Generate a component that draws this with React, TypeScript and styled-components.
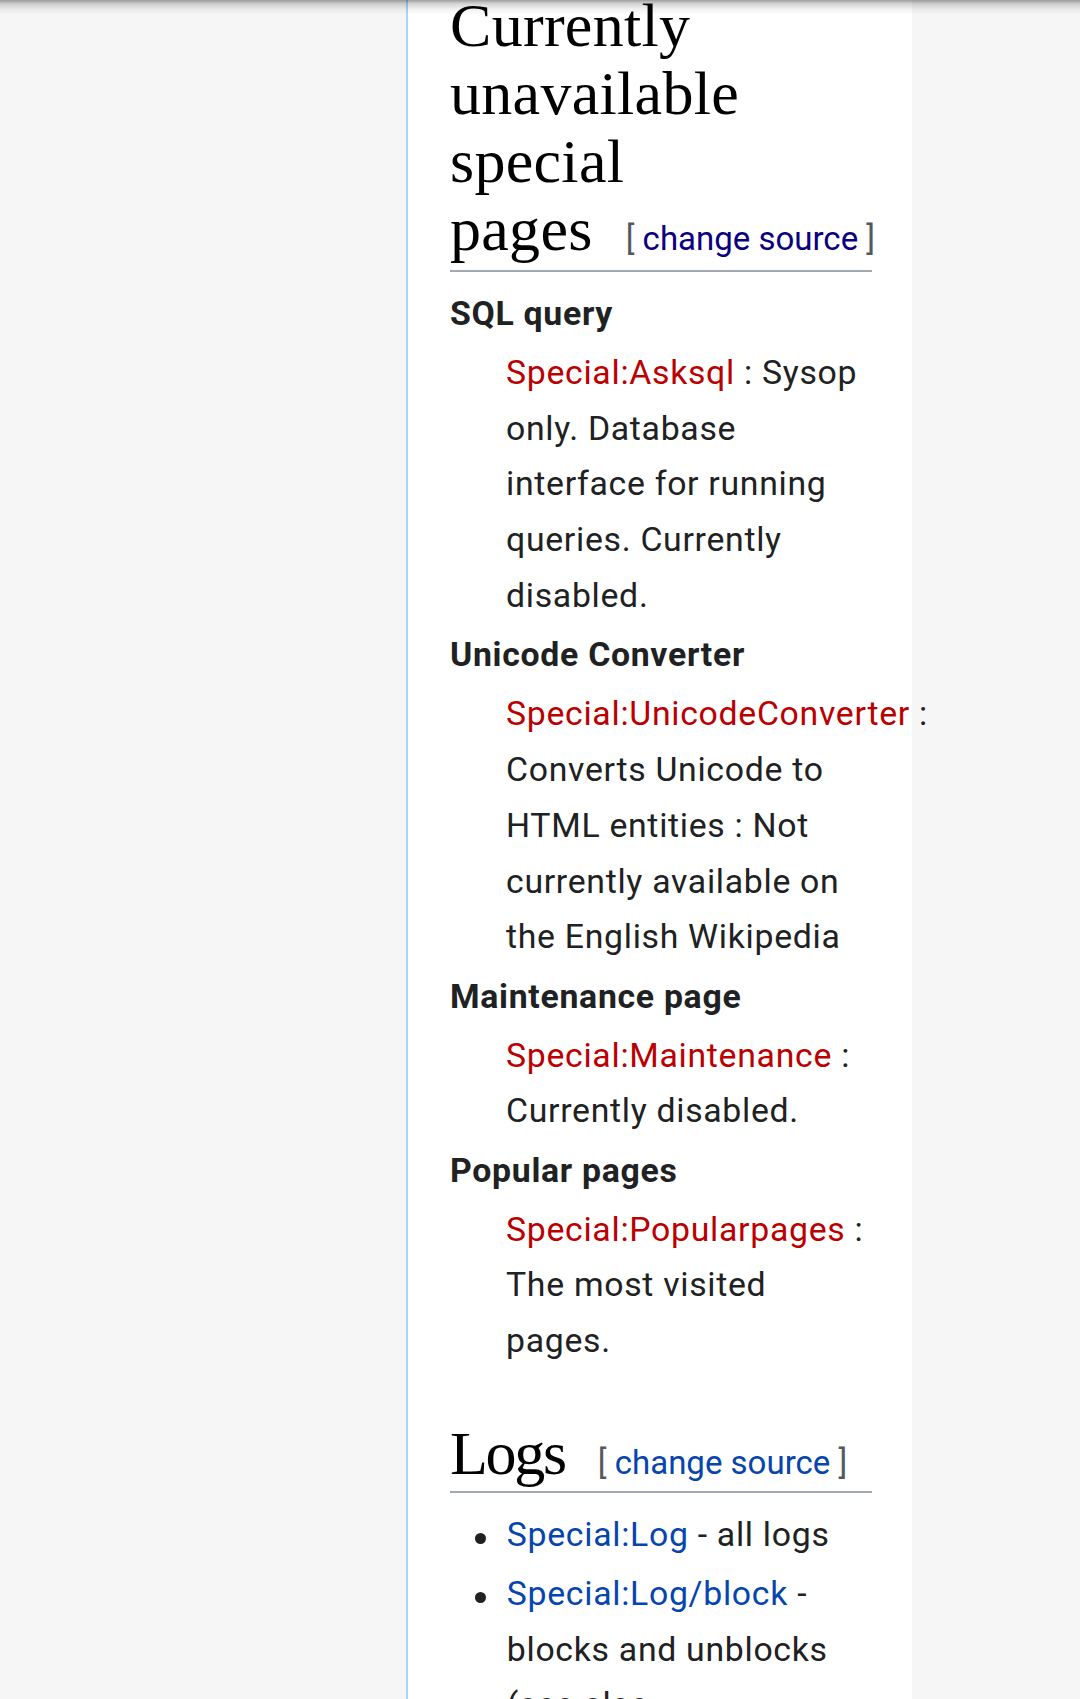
import React from "react";
import styled, { createGlobalStyle } from "styled-components";

const GlobalStyle = createGlobalStyle`
  html, body {
    margin: 0;
    padding: 0;
    background: #f6f6f6;
  }
  body {
    font-family: Roboto, "Liberation Sans", Arial, sans-serif;
    overflow: hidden;
  }
`;

const TopShadow = styled.div`
  position: fixed;
  top: 0;
  left: 0;
  right: 0;
  height: 15px;
  background: linear-gradient(
    to bottom,
    rgba(0, 0, 0, 0.38) 0%,
    rgba(0, 0, 0, 0.17) 25%,
    rgba(0, 0, 0, 0.05) 62%,
    rgba(0, 0, 0, 0) 100%
  );
  pointer-events: none;
  z-index: 10;
`;

const Page = styled.div`
  display: flex;
  min-height: 1699px;
  background: #f6f6f6;
`;

const Gutter = styled.div`
  flex: none;
  width: 406px;
`;

const Panel = styled.main`
  flex: none;
  width: 422px;
  padding: 0 40px 0 42px;
  background: #ffffff;
  border-left: 2px solid #a7d7f9;
  color: #202122;
  font-size: 33.8px;
  line-height: 55.8px;
  letter-spacing: 0.7px;
`;

const Heading = styled.h2<{ $first?: boolean }>`
  margin: ${(p) => (p.$first ? "-9px" : "50px")} 0 14px;
  padding: 0 0 ${(p) => (p.$first ? "7px" : "4px")};
  border-bottom: 2px solid #a2a9b1;
  font-family: "Liberation Serif", "Times New Roman", serif;
  font-weight: normal;
  font-size: 62px;
  line-height: 68px;
  letter-spacing: ${(p) => (p.$first ? "0.3px" : "-2.3px")};
  color: #000000;
`;

const NoWrap = styled.span`
  white-space: nowrap;
`;

const EditSection = styled.span`
  margin-left: 33px;
  font-family: Roboto, "Liberation Sans", sans-serif;
  font-size: 33px;
  line-height: 1;
  letter-spacing: 0;
  color: #54595d;
  white-space: nowrap;
`;

const Link = styled.a<{ $tone: "visited" | "blue" | "red" }>`
  color: ${(p) =>
    p.$tone === "visited" ? "#0b0080" : p.$tone === "red" ? "#ba0000" : "#0645ad"};
  text-decoration: none;
`;

const DefList = styled.dl`
  margin: 2px 0 0;
`;

const Term = styled.dt`
  font-weight: bold;
`;

const Desc = styled.dd`
  margin: 3px 6px 3.6px 56px;
`;

const BulletList = styled.ul`
  margin: 0;
  padding: 0 0 0 25px;
  list-style: none;
`;

const Item = styled.li`
  display: flex;
  margin-bottom: 3px;
`;

const Bullet = styled.span`
  flex: none;
  width: 11px;
  height: 11px;
  margin: 26px 20.8px 0 0;
  border-radius: 50%;
  background: #202122;
`;

const ItemText = styled.span`
  flex: 1;
  min-width: 0;
`;

const Edit = ({ tone }: { tone: "visited" | "blue" }) => (
  <EditSection>
    [ <Link $tone={tone} href="#">change source</Link> ]
  </EditSection>
);

const unavailable = [
  {
    term: "SQL query",
    link: "Special:Asksql",
    text: "Sysop only. Database interface for running queries. Currently disabled.",
  },
  {
    term: "Unicode Converter",
    link: "Special:UnicodeConverter",
    text: "Converts Unicode to HTML entities : Not currently available on the English Wikipedia",
  },
  {
    term: "Maintenance page",
    link: "Special:Maintenance",
    text: "Currently disabled.",
  },
  {
    term: "Popular pages",
    link: "Special:Popularpages",
    text: "The most visited pages.",
  },
];

const logs: { link: string; text: React.ReactNode }[] = [
  { link: "Special:Log", text: "all logs" },
  {
    link: "Special:Log/block",
    text: (
      <>
        blocks and unblocks (see also <Link $tone="blue" href="#">Special:BlockList</Link>)
      </>
    ),
  },
  { link: "Special:Log/protect", text: "protections and unprotections" },
  { link: "Special:Log/rights", text: "changes to user groups" },
];

export default function App() {
  return (
    <>
      <GlobalStyle />
      <TopShadow />
      <Page>
        <Gutter />
        <Panel>
          <Heading $first>
            Currently unavailable special{" "}
            <NoWrap>
              pages<Edit tone="visited" />
            </NoWrap>
          </Heading>
          <DefList>
            {unavailable.map((u) => (
              <React.Fragment key={u.term}>
                <Term>{u.term}</Term>
                <Desc>
                  <Link $tone="red" href="#">{u.link}</Link>
                  {"\u00a0: "}
                  {u.text}
                </Desc>
              </React.Fragment>
            ))}
          </DefList>
          <Heading>
            <NoWrap>
              Logs<Edit tone="blue" />
            </NoWrap>
          </Heading>
          <BulletList>
            {logs.map((l) => (
              <Item key={l.link}>
                <Bullet />
                <ItemText>
                  <Link $tone="blue" href="#">{l.link}</Link> - {l.text}
                </ItemText>
              </Item>
            ))}
          </BulletList>
        </Panel>
      </Page>
    </>
  );
}
